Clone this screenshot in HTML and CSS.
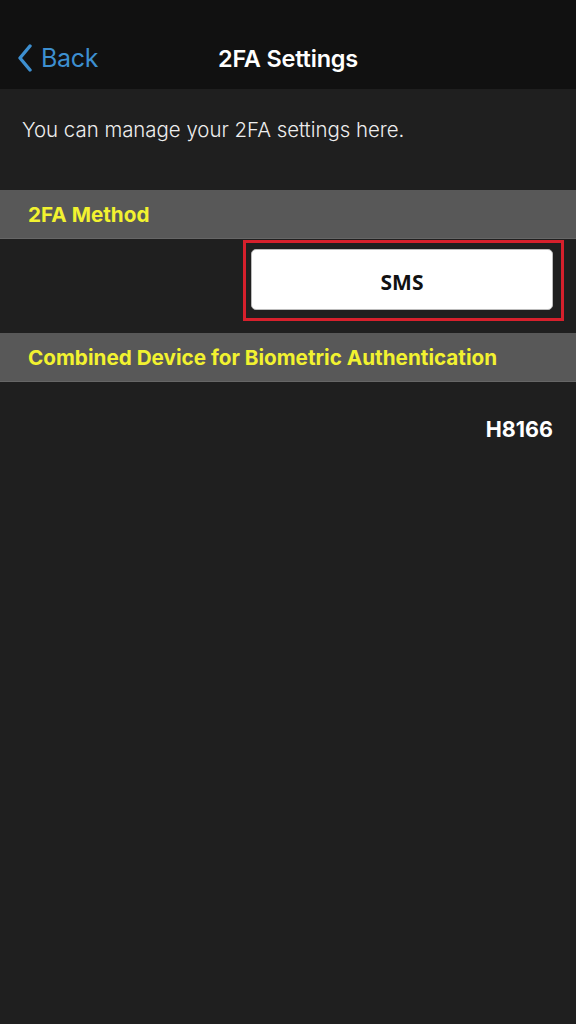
FILE: index.html
```html
<!DOCTYPE html>
<html lang="en">
<head>
  <meta charset="UTF-8" />
  <title>2FA Settings</title>
  <link rel="stylesheet" href="styles.css">
</head>
<body>
  <!-- Navigation bar -->
  <div class="navbar">
    <a class="back" href="#">
      <svg class="chevron" width="16" height="28" viewBox="0 0 16 28">
        <path d="M13 2 L3 14 L13 26" fill="none" stroke="#3d8fd0" stroke-width="3.4" stroke-linecap="round" stroke-linejoin="round"/>
      </svg>
      <span>Back</span>
    </a>
    <h1 class="title">2FA Settings</h1>
  </div>

  <p class="intro">You can manage your 2FA settings here.</p>

  <!-- 2FA Method -->
  <div class="section">2FA Method</div>
  <div class="method-row">
    <div class="highlight">
      <button class="method-btn">SMS</button>
    </div>
  </div>

  <!-- Biometric device -->
  <div class="section">Combined Device for Biometric Authentication</div>
  <div class="device">H8166</div>
</body>
</html>
```

FILE: styles.css
```css
body {
  margin: 0;
  background: #1f1f1f;
  font-family: Inter, 'Noto Sans', sans-serif;
  color: #f2f2f2;
  height: 1024px;
}

.navbar {
  position: relative;
  height: 89px;
  background: #111111;
  display: flex;
  align-items: flex-end;
  justify-content: center;
  box-sizing: border-box;
  padding-bottom: 16px;
}

.back {
  position: absolute;
  left: 17px;
  bottom: 16px;
  display: flex;
  align-items: center;
  gap: 8px;
  color: #3d8fd0;
  text-decoration: none;
  font-size: 25px;
  letter-spacing: -0.3px;
}

.chevron {
  display: block;
}

.title {
  margin: 0;
  font-size: 23.5px;
  font-weight: 600;
  color: #ffffff;
  letter-spacing: -0.2px;
}

.intro {
  margin: 0;
  padding: 29px 22px 48px;
  font-size: 20.4px;
  font-weight: 300;
  line-height: 24px;
  color: #eeeeee;
}

.section {
  background: #585858;
  color: #f2f230;
  font-weight: 700;
  font-size: 20.7px;
  height: 48px;
  line-height: 50px;
  padding: 0 28px;
  border-bottom: 1px solid #666;
}

.method-row {
  display: flex;
  justify-content: flex-end;
  padding: 1px 12px 12px 0;
}

.highlight {
  border: 3px solid #d6202c;
  padding: 6px 8px 8px 5px;
}

.method-btn {
  display: block;
  width: 302px;
  height: 61px;
  padding-top: 6px;
  background: #ffffff;
  border: 1px solid #bbb;
  border-radius: 5px;
  font-family: 'Open Sans', sans-serif;
  font-weight: 700;
  font-size: 21px;
  color: #111;
}

.device {
  text-align: right;
  padding: 34px 23px;
  font-size: 21.5px;
  font-weight: 700;
  color: #ffffff;
}
```
